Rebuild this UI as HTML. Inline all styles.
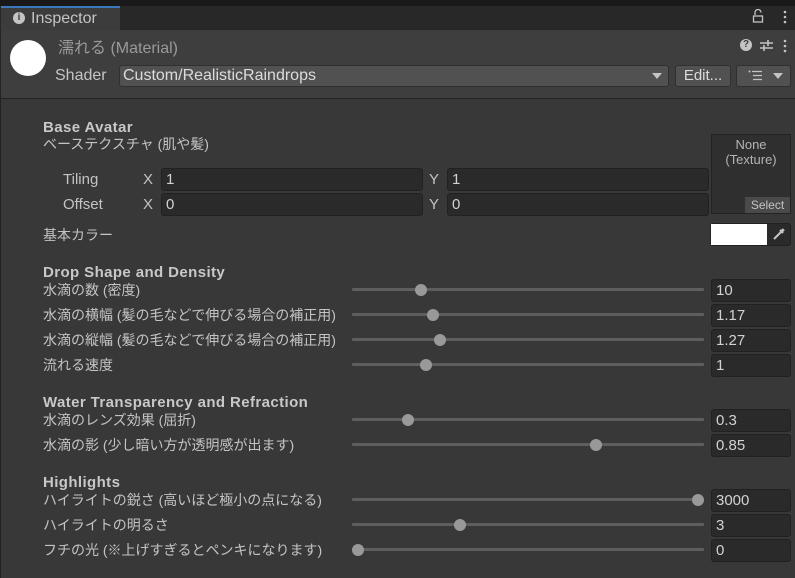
<!DOCTYPE html>
<html><head><meta charset="utf-8"><style>
*{margin:0;padding:0;box-sizing:border-box}
body{width:795px;height:578px;background:#383838;position:relative;overflow:hidden;font-family:"Liberation Sans","Noto Sans CJK JP",sans-serif;font-size:14px;color:#c4c4c4}
.a{position:absolute;white-space:nowrap}
.t{line-height:16px}
.h{font-weight:bold;color:#c8c8c8;font-size:15px;letter-spacing:0.4px;line-height:16px}
.f{position:absolute;background:#2a2a2a;border:1px solid #212121;border-radius:3px;color:#d2d2d2;padding-left:4px;line-height:22px;font-size:15px}
.tr{position:absolute;left:352px;width:352px;height:3px;background:#5e5e5e;border-radius:1px}
.k{position:absolute;width:12px;height:12px;border-radius:6px;background:#999}
</style></head><body>
<div class="a" style="left:0;top:0;width:795px;height:30px;background:#191919"></div>
<div class="a" style="left:0;top:6px;width:795px;height:24px;background:#282828"></div>
<div class="a" style="left:1px;top:6px;width:119px;height:25px;background:#3c3c3c;border-top:2px solid #3a79bb"></div>
<div class="a" style="left:13px;top:12px;width:12px;height:12px;border-radius:6px;background:#c4c4c4;color:#3c3c3c;font-size:10px;font-weight:bold;text-align:center;line-height:12px">i</div>
<div class="a" style="left:31px;top:10px;font-size:16px;color:#c4c4c4">Inspector</div>
<svg class="a" style="left:752px;top:9px" width="12" height="14" viewBox="0 0 12 14"><path d="M3 6V3.5a3 3 0 0 1 6 0" fill="none" stroke="#c4c4c4" stroke-width="1.3"/><rect x="1.5" y="7" width="9" height="6" fill="none" stroke="#c4c4c4" stroke-width="1.3"/></svg>
<svg class="a" style="left:783px;top:10px" width="4" height="14"><circle cx="2" cy="2" r="1.3" fill="#c4c4c4"/><circle cx="2" cy="7" r="1.3" fill="#c4c4c4"/><circle cx="2" cy="12" r="1.3" fill="#c4c4c4"/></svg>
<div class="a" style="left:0;top:30px;width:795px;height:68px;background:#3e3e3e"></div>
<div class="a" style="left:0;top:98px;width:795px;height:1px;background:#232323"></div>
<div class="a" style="left:0;top:30px;width:1px;height:548px;background:#232323"></div>
<div class="a" style="left:10px;top:40px;width:36px;height:36px;border-radius:18px;background:#fff"></div>
<div class="a" style="left:58px;top:34px;font-size:16px;color:#9a9a9a">濡れる (Material)</div>
<div class="a" style="left:740px;top:39px;width:12px;height:12px;border-radius:6px;background:#c4c4c4;color:#3e3e3e;font-size:10px;font-weight:bold;text-align:center;line-height:12px">?</div>
<svg class="a" style="left:760px;top:39px" width="13" height="13" viewBox="0 0 13 13"><path d="M0 4H13M0 9H13" stroke="#c4c4c4" stroke-width="1.4"/><path d="M8 1V7M4 6V12" stroke="#c4c4c4" stroke-width="1.6"/></svg>
<svg class="a" style="left:783px;top:39px" width="4" height="14"><circle cx="2" cy="2" r="1.3" fill="#c4c4c4"/><circle cx="2" cy="7" r="1.3" fill="#c4c4c4"/><circle cx="2" cy="12" r="1.3" fill="#c4c4c4"/></svg>
<div class="a" style="left:55px;top:67px;font-size:16px;color:#c4c4c4">Shader</div>
<div class="a" style="left:119px;top:65px;width:550px;height:22px;background:#515151;border:1px solid #303030;border-radius:3px;padding-left:3px;line-height:20px;font-size:16px;color:#dcdcdc">Custom/RealisticRaindrops</div>
<div class="a" style="left:652px;top:73px;border-left:5px solid transparent;border-right:5px solid transparent;border-top:6px solid #c4c4c4"></div>
<div class="a" style="left:675px;top:65px;width:56px;height:22px;background:#515151;border:1px solid #303030;border-radius:3px;text-align:center;line-height:20px;font-size:15px;color:#dcdcdc">Edit...</div>
<div class="a" style="left:736px;top:65px;width:55px;height:22px;background:#515151;border:1px solid #303030;border-radius:3px"></div>
<svg class="a" style="left:748px;top:70px" width="14" height="11"><path d="M4 1.5H14M5 5.5H14M5 9.5H14" stroke="#c4c4c4" stroke-width="1.2"/><circle cx="1.5" cy="1.5" r="1" fill="#c4c4c4"/></svg>
<div class="a" style="left:773px;top:73px;border-left:5px solid transparent;border-right:5px solid transparent;border-top:6px solid #c4c4c4"></div>

<div class="a h" style="left:43px;top:120px">Base Avatar</div>
<div class="a t" style="left:43px;top:136px">ベーステクスチャ (肌や髪)</div>
<div class="a" style="left:63px;top:171px;font-size:15px">Tiling</div>
<div class="a" style="left:63px;top:196px;font-size:15px">Offset</div>
<div class="a" style="left:143px;top:171px;font-size:15px">X</div>
<div class="a" style="left:143px;top:196px;font-size:15px">X</div>
<div class="a" style="left:429px;top:171px;font-size:15px">Y</div>
<div class="a" style="left:429px;top:196px;font-size:15px">Y</div>
<div class="f" style="left:161px;top:168px;width:262px;height:23px">1</div>
<div class="f" style="left:161px;top:193px;width:262px;height:23px">0</div>
<div class="f" style="left:447px;top:168px;width:262px;height:23px">1</div>
<div class="f" style="left:447px;top:193px;width:262px;height:23px">0</div>
<div class="a" style="left:711px;top:134px;width:80px;height:80px;background:#2f2f2f;border:1px solid #232323"></div>
<div class="a" style="left:711px;top:137px;width:80px;text-align:center;line-height:15px;font-size:13px;color:#b4b4b4">None<br>(Texture)</div>
<div class="a" style="left:745px;top:197px;width:45px;height:16px;background:#4a4a4a;font-size:12px;line-height:16px;text-align:center;color:#c4c4c4">Select</div>
<div class="a t" style="left:43px;top:227px">基本カラー</div>
<div class="a" style="left:710px;top:223px;width:81px;height:23px;background:#2a2a2a;border:1px solid #212121;border-radius:3px"></div>
<div class="a" style="left:711px;top:224px;width:56px;height:21px;background:#fff"></div>
<svg class="a" style="left:772px;top:227px" width="14" height="14"><path d="M2 12L9 5" stroke="#c4c4c4" stroke-width="2"/><path d="M8 3L11 6M10 2L12 4" stroke="#c4c4c4" stroke-width="2.2"/></svg>

<div class="a h" style="left:43px;top:265px">Drop Shape and Density</div>
<div class="a t" style="left:43px;top:282px">水滴の数 (密度)</div>
<div class="a t" style="left:43px;top:307px">水滴の横幅 (髪の毛などで伸びる場合の補正用)</div>
<div class="a t" style="left:43px;top:332px">水滴の縦幅 (髪の毛などで伸びる場合の補正用)</div>
<div class="a t" style="left:43px;top:357px">流れる速度</div>
<div class="a h" style="left:43px;top:395px">Water Transparency and Refraction</div>
<div class="a t" style="left:43px;top:412px">水滴のレンズ効果 (屈折)</div>
<div class="a t" style="left:43px;top:437px">水滴の影 (少し暗い方が透明感が出ます)</div>
<div class="a h" style="left:43px;top:475px">Highlights</div>
<div class="a t" style="left:43px;top:492px">ハイライトの鋭さ (高いほど極小の点になる)</div>
<div class="a t" style="left:43px;top:517px">ハイライトの明るさ</div>
<div class="a t" style="left:43px;top:542px">フチの光 (※上げすぎるとペンキになります)</div>

<div class="tr" style="top:288px"></div><div class="k" style="left:415px;top:284px"></div><div class="f" style="left:711px;top:279px;width:80px;height:23px">10</div>
<div class="tr" style="top:313px"></div><div class="k" style="left:427px;top:309px"></div><div class="f" style="left:711px;top:304px;width:80px;height:23px">1.17</div>
<div class="tr" style="top:338px"></div><div class="k" style="left:434px;top:334px"></div><div class="f" style="left:711px;top:329px;width:80px;height:23px">1.27</div>
<div class="tr" style="top:363px"></div><div class="k" style="left:420px;top:359px"></div><div class="f" style="left:711px;top:354px;width:80px;height:23px">1</div>
<div class="tr" style="top:418px"></div><div class="k" style="left:402px;top:414px"></div><div class="f" style="left:711px;top:409px;width:80px;height:23px">0.3</div>
<div class="tr" style="top:443px"></div><div class="k" style="left:590px;top:439px"></div><div class="f" style="left:711px;top:434px;width:80px;height:23px">0.85</div>
<div class="tr" style="top:498px"></div><div class="k" style="left:692px;top:494px"></div><div class="f" style="left:711px;top:489px;width:80px;height:23px">3000</div>
<div class="tr" style="top:523px"></div><div class="k" style="left:454px;top:519px"></div><div class="f" style="left:711px;top:514px;width:80px;height:23px">3</div>
<div class="tr" style="top:548px"></div><div class="k" style="left:352px;top:544px"></div><div class="f" style="left:711px;top:539px;width:80px;height:23px">0</div>
</body></html>
